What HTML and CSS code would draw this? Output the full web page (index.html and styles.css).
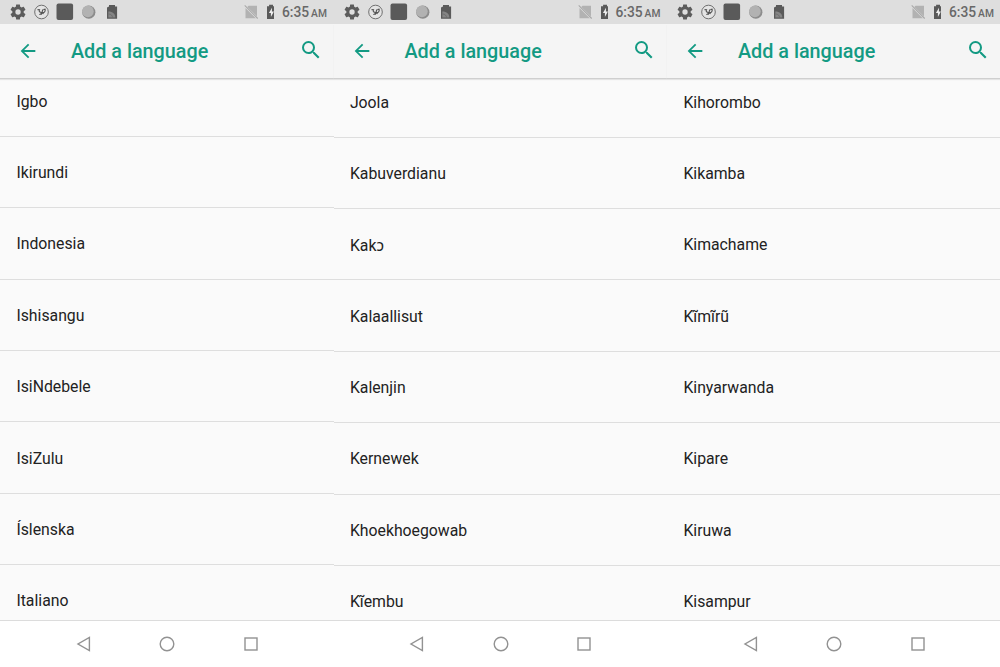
FILE: index.html
```
<!DOCTYPE html>
<html lang="en">
<head>
    <meta charset="UTF-8">
    <meta name="viewport" content="width=device-width, initial-scale=1.0">
    <title>Add a language</title>
    <link rel="stylesheet" href="styles.css">
</head>
<body>
    <!-- Shared icons -->
    <svg class="icon-defs" aria-hidden="true">
        <symbol id="status-left" viewBox="0 0 120 24">
            <path fill="#5c5c5c" transform="translate(8.9 2.9) scale(.76)" d="M19.43 12.98c.04-.32.07-.64.07-.98s-.03-.66-.07-.98l2.11-1.65c.19-.15.24-.42.12-.64l-2-3.46c-.12-.22-.39-.3-.61-.22l-2.49 1c-.52-.4-1.08-.73-1.69-.98l-.38-2.65C14.46 2.18 14.25 2 14 2h-4c-.25 0-.46.18-.49.42l-.38 2.65c-.61.25-1.17.59-1.69.98l-2.49-1c-.23-.09-.49 0-.61.22l-2 3.46c-.13.22-.07.49.12.64l2.11 1.65c-.04.32-.07.65-.07.98s.03.66.07.98l-2.11 1.65c-.19.15-.24.42-.12.64l2 3.46c.12.22.39.3.61.22l2.49-1c.52.4 1.08.73 1.69.98l.38 2.65c.03.24.24.42.49.42h4c.25 0 .46-.18.49-.42l.38-2.65c.61-.25 1.17-.59 1.69-.98l2.49 1c.23.09.49 0 .61-.22l2-3.46c.12-.22.07-.49-.12-.64l-2.11-1.65zM12 15.5a3.5 3.5 0 1 1 0-7 3.5 3.5 0 0 1 0 7z"/>
            <circle cx="41.5" cy="12" r="6.8" fill="#e4e4e4" stroke="#707070" stroke-width="1"/>
            <path d="M37.5 9.600l2 .1c-.8 1.900.2 2.200 1.200 2.500 1.100.5.500 2.300-1.400 2.300M41.400 14.600l1.400-5.100M42.400 12.500c2 .2 3-.9 2.800-3.200M43.400 9.600l2.200-.5M42.500 12.700l1 1.300" fill="none" stroke="#555" stroke-width="1.100"/>
            <rect x="56.500" y="3.400" width="16.600" height="16.600" rx="2" fill="#5a5a5a"/>
            <circle cx="88.800" cy="12.200" r="6.600" fill="#8c8c8c"/>
            <circle cx="87.900" cy="11.400" r="5.800" fill="#b2b2b2"/>
            <path d="M107 7.500l2-1V5h6v1.500h2.100v12.200H107z" fill="#5a5a5a"/>
            <path d="M108.300 11.500c4.500 0 7 2.500 7 6h-7z" fill="#858585"/>
            <path d="M108.500 14c2.500 0 4 1.500 4 3.500" fill="none" stroke="#666" stroke-width=".7"/>
        </symbol>
        <symbol id="status-right" viewBox="0 0 34 24">
            <path d="M8.500 5.800h8.500v10.700L7.300 6.900zM5.500 8l10.300 10.200H5.500z" fill="#b2b2b2"/>
            <path d="M4.700 5.300l13 13.200" fill="none" stroke="#a8a8a8" stroke-width="1.100"/>
            <path d="M29.100 4.800h3.900v1.400h2.200v12.700h-8.200V6.200h2.100z" fill="#5a5a5a"/>
            <path d="M32 7.800l-3.100 5.200h2v3.900l3-5.300h-2z" fill="#eee"/>
        </symbol>
        <symbol id="back" viewBox="0 0 24 24">
            <path d="M20 11H7.830l5.590-5.590L12 4l-8 8 8 8 1.410-1.410L7.830 13H20v-2z"/>
        </symbol>
        <symbol id="search" viewBox="0 0 24 24">
            <path d="M15.500 14h-.790l-.280-.270A6.470 6.470 0 0 0 16 9.500 6.500 6.500 0 1 0 9.500 16c1.610 0 3.090-.590 4.230-1.570l.270.280v.790l5 4.990L20.490 19l-4.990-5zm-6 0a4.500 4.500 0 1 1 0-9 4.500 4.500 0 0 1 0 9z"/>
        </symbol>
        <symbol id="nav-back" viewBox="0 0 16 16">
            <path d="M13.400 1.500v13L2 8z"/>
        </symbol>
        <symbol id="nav-home" viewBox="0 0 16 16">
            <circle cx="8" cy="8" r="6.800"/>
        </symbol>
        <symbol id="nav-recent" viewBox="0 0 16 16">
            <rect x="2" y="2" width="12" height="12"/>
        </symbol>
    </svg>

    <div class="screens">
        <section class="screen">
            <div class="status-bar">
                <svg class="status-left"><use href="#status-left"/></svg>
                <svg class="status-right"><use href="#status-right"/></svg>
                <span class="time">6:35 <small>AM</small></span>
            </div>
            <header class="app-bar">
                <svg class="back"><use href="#back"/></svg>
                <h1>Add a language</h1>
                <svg class="search"><use href="#search"/></svg>
            </header>
            <ul class="languages">
                <li>Igbo</li>
                <li>Ikirundi</li>
                <li>Indonesia</li>
                <li>Ishisangu</li>
                <li>IsiNdebele</li>
                <li>IsiZulu</li>
                <li>Íslenska</li>
                <li>Italiano</li>
            </ul>
            <nav class="nav-bar">
                <svg><use href="#nav-back"/></svg>
                <svg><use href="#nav-home"/></svg>
                <svg><use href="#nav-recent"/></svg>
            </nav>
        </section>

        <section class="screen scrolled">
            <div class="status-bar">
                <svg class="status-left"><use href="#status-left"/></svg>
                <svg class="status-right"><use href="#status-right"/></svg>
                <span class="time">6:35 <small>AM</small></span>
            </div>
            <header class="app-bar">
                <svg class="back"><use href="#back"/></svg>
                <h1>Add a language</h1>
                <svg class="search"><use href="#search"/></svg>
            </header>
            <ul class="languages">
                <li>Joola</li>
                <li>Kabuverdianu</li>
                <li>Kakɔ</li>
                <li>Kalaallisut</li>
                <li>Kalenjin</li>
                <li>Kernewek</li>
                <li>Khoekhoegowab</li>
                <li>Kĩembu</li>
            </ul>
            <nav class="nav-bar">
                <svg><use href="#nav-back"/></svg>
                <svg><use href="#nav-home"/></svg>
                <svg><use href="#nav-recent"/></svg>
            </nav>
        </section>

        <section class="screen scrolled">
            <div class="status-bar">
                <svg class="status-left"><use href="#status-left"/></svg>
                <svg class="status-right"><use href="#status-right"/></svg>
                <span class="time">6:35 <small>AM</small></span>
            </div>
            <header class="app-bar">
                <svg class="back"><use href="#back"/></svg>
                <h1>Add a language</h1>
                <svg class="search"><use href="#search"/></svg>
            </header>
            <ul class="languages">
                <li>Kihorombo</li>
                <li>Kikamba</li>
                <li>Kimachame</li>
                <li>Kĩmĩrũ</li>
                <li>Kinyarwanda</li>
                <li>Kipare</li>
                <li>Kiruwa</li>
                <li>Kisampur</li>
            </ul>
            <nav class="nav-bar">
                <svg><use href="#nav-back"/></svg>
                <svg><use href="#nav-home"/></svg>
                <svg><use href="#nav-recent"/></svg>
            </nav>
        </section>
    </div>
</body>
</html>
```
FILE: styles.css
```
* {
    box-sizing: border-box;
    margin: 0;
    padding: 0;
}

body {
    font-family: Roboto, "Noto Sans", sans-serif;
    background-color: #fff;
    overflow: hidden;
}

.icon-defs {
    display: none;
}

.screens {
    display: grid;
    grid-template-columns: repeat(3, 333.5px);
    height: 667px;
}

.screen {
    display: flex;
    flex-direction: column;
    height: 667px;
    min-width: 0;
}

.status-bar {
    display: flex;
    align-items: center;
    flex: none;
    height: 24px;
    background-color: #dedede;
}

.status-left {
    width: 120px;
    height: 24px;
}

.status-right {
    width: 34px;
    height: 24px;
    margin-left: 120px;
    overflow: visible;
}

.time {
    margin-left: 8px;
    padding-top: 1px;
    font-size: 13.8px;
    font-weight: 500;
    line-height: 24px;
    color: #686868;
    white-space: nowrap;
}

.time small {
    margin-left: -1.5px;
    font-size: 10.3px;
}

.app-bar {
    display: flex;
    align-items: center;
    flex: none;
    height: 55px;
    padding: 0 11px 0 17px;
    background-color: #f5f5f5;
    border-bottom: 1px solid #cfcfcf;
    box-shadow: 0 1px 1px #e4e4e4;
    position: relative;
    z-index: 1;
}

.app-bar svg {
    fill: #139a83;
}

.back {
    width: 22px;
    height: 22px;
}

.app-bar h1 {
    flex: 1;
    margin-left: 32px;
    padding-top: 2px;
    font-size: 19.8px;
    font-weight: 500;
    line-height: 28px;
    color: #139a83;
}

.search {
    width: 24px;
    height: 24px;
    margin-bottom: 2px;
}

.languages {
    flex: 1;
    min-height: 0;
    overflow: hidden;
    background-color: #fafafa;
    border-bottom: 1px solid #dcdcdc;
    list-style: none;
}

.languages li {
    display: flex;
    align-items: center;
    height: 71.4px;
    padding: 1px 0 0 16.4px;
    border-bottom: 1px solid #dedede;
    font-size: 15.8px;
    color: #222;
}

.languages li:first-child {
    margin-top: -13.5px;
}

.scrolled .languages li:first-child {
    margin-top: -12.7px;
}

.nav-bar {
    display: flex;
    align-items: center;
    justify-content: center;
    gap: 67.5px;
    flex: none;
    height: 46px;
    padding-left: 1px;
    background-color: #fff;
}

.nav-bar svg {
    width: 16px;
    height: 16px;
    fill: none;
    stroke: #929292;
    stroke-width: 1.4;
}
```
